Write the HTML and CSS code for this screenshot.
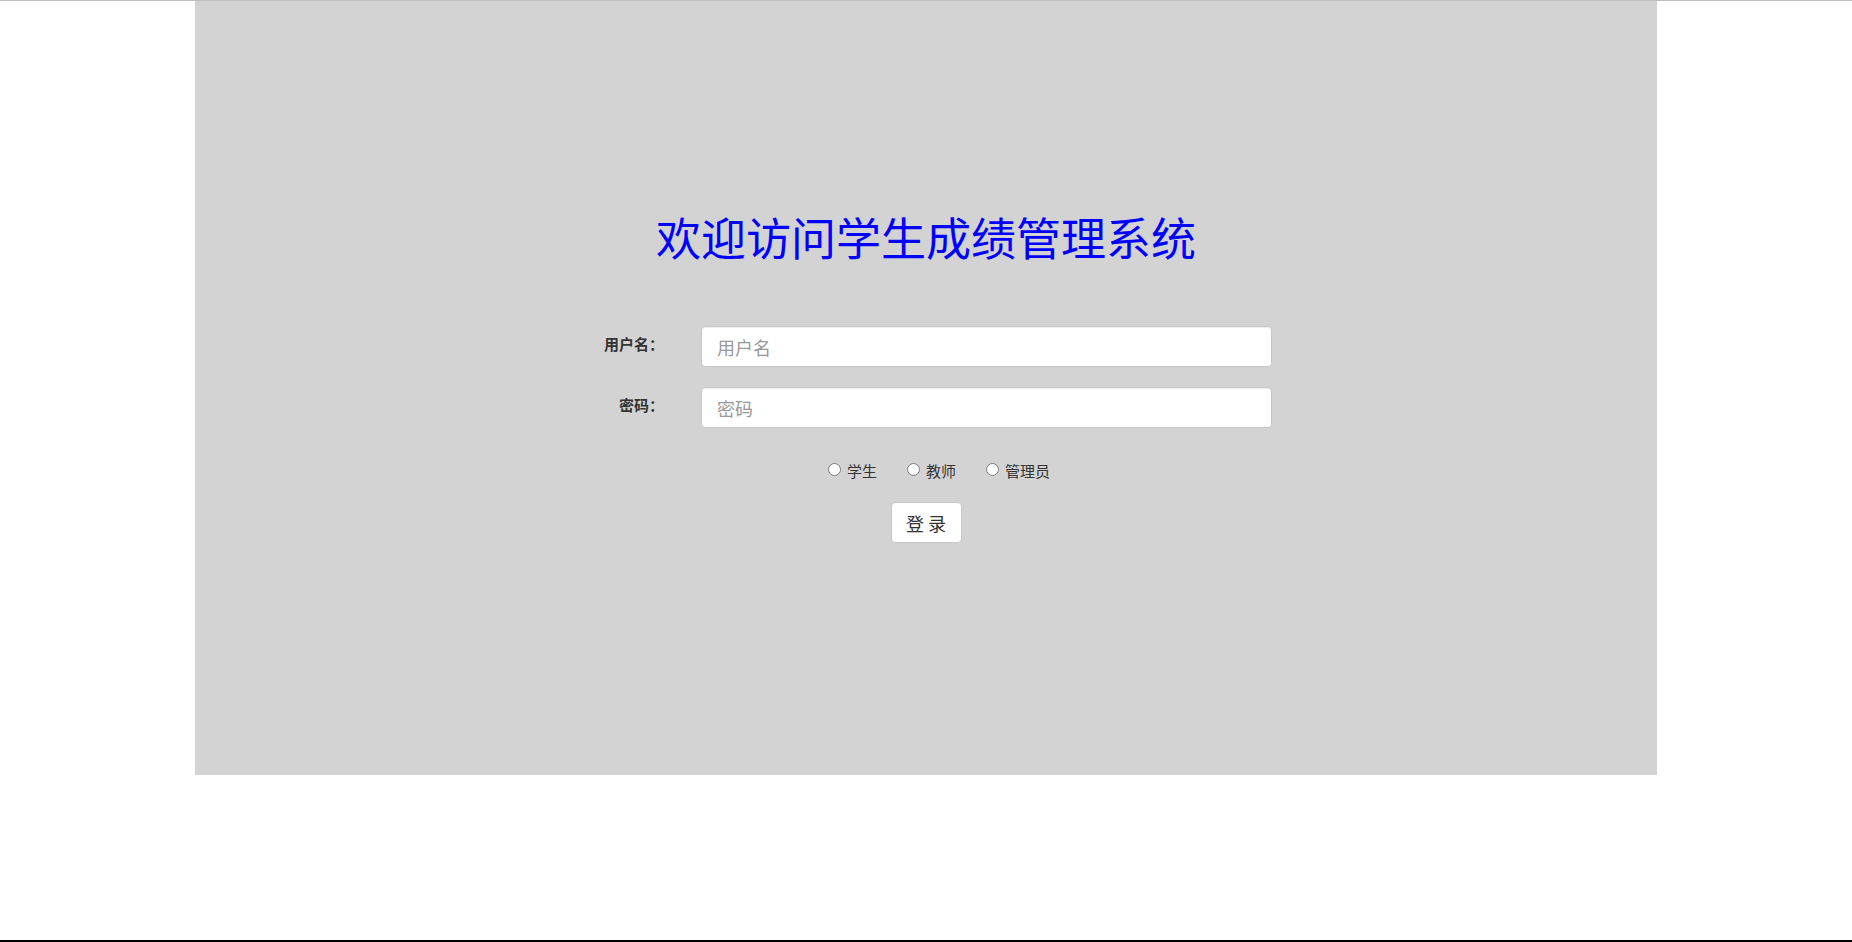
FILE: index.html
```html
<!DOCTYPE html>
<html lang="zh-CN">
<head>
<meta charset="utf-8">
<title>学生成绩管理系统</title>
<link rel="stylesheet" href="styles.css">
</head>
<body>
<div class="page">
  <main class="panel">
    <h1 class="title">欢迎访问学生成绩管理系统</h1>
    <form class="login-form">
      <div class="form-row">
        <label class="form-label" for="username">用户名：</label>
        <input class="form-input" id="username" type="text" placeholder="用户名">
      </div>
      <div class="form-row">
        <label class="form-label" for="password">密码：</label>
        <input class="form-input" id="password" type="password" placeholder="密码">
      </div>
      <div class="role-row">
        <label class="role"><input class="role-radio" type="radio" name="role" value="student"><span>学生</span></label>
        <label class="role"><input class="role-radio" type="radio" name="role" value="teacher"><span>教师</span></label>
        <label class="role"><input class="role-radio" type="radio" name="role" value="admin"><span>管理员</span></label>
      </div>
      <div class="submit-row">
        <button class="submit-btn" type="button">登 录</button>
      </div>
    </form>
  </main>
</div>
</body>
</html>
```

FILE: styles.css
```css
html, body {
  margin: 0;
  padding: 0;
  background: #ffffff;
}

body {
  font-family: "Noto Sans CJK SC", "Noto Sans", "Liberation Sans", sans-serif;
  color: #333333;
}

.page {
  box-sizing: border-box;
  height: 942px;
  border-top: 1px solid #bdbdbd;
  border-bottom: 2px solid #000000;
}

.panel {
  width: 1462px;
  height: 774px;
  margin: 0 auto;
  background: #d3d3d3;
  padding-top: 209px;
  box-sizing: border-box;
}

.title {
  margin: 0;
  font-size: 45px;
  line-height: 54px;
  font-weight: normal;
  color: #0000ff;
  text-align: center;
}

.login-form {
  margin-top: 62px;
  display: flex;
  flex-direction: column;
  align-items: center;
}

.form-row {
  display: grid;
  grid-template-columns: 121px 571px;
  align-items: center;
  margin-bottom: 20px;
}

.form-row + .form-row {
  margin-bottom: 0;
}

.form-label {
  text-align: right;
  padding-right: 37px;
  font-size: 15px;
  font-weight: bold;
  color: #333333;
  line-height: 20px;
  position: relative;
  top: -3px;
}

.form-input {
  box-sizing: border-box;
  height: 41px;
  width: 571px;
  margin: 0;
  padding: 0 15px;
  border: 1px solid #c8c8c8;
  border-radius: 4px;
  background: #ffffff;
  box-shadow: inset 0 1px 1px rgba(0, 0, 0, 0.075);
  font-family: inherit;
  font-size: 18px;
  color: #555555;
  outline: none;
}

.form-input::placeholder {
  color: #999999;
}

.role-row {
  display: flex;
  align-items: center;
  gap: 30px;
  margin-top: 33px;
  padding-left: 26px;
  height: 20px;
}

.role {
  display: flex;
  align-items: center;
  gap: 6px;
  font-size: 15px;
  line-height: 20px;
  color: #333333;
}

.role-radio {
  width: 13px;
  height: 13px;
  margin: 0 0 3px 0;
}

.submit-row {
  margin-top: 21px;
  display: flex;
  justify-content: center;
}

.submit-btn {
  box-sizing: border-box;
  width: 71px;
  height: 41px;
  padding: 0;
  border: 1px solid #c8c8c8;
  border-radius: 4px;
  background: #ffffff;
  font-family: inherit;
  font-size: 18px;
  color: #333333;
  cursor: pointer;
}
```
